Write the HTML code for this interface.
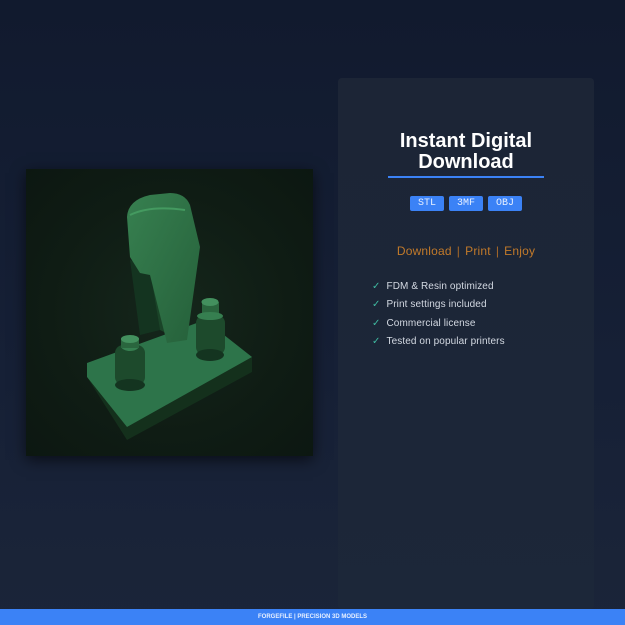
<!DOCTYPE html>
<html><head><style>
*{margin:0;padding:0;box-sizing:border-box}
body{width:625px;height:625px;overflow:hidden;position:relative;background:linear-gradient(180deg,#111a2e 0%,#162036 60%,#1b2539 100%);font-family:"Liberation Sans",sans-serif}
.panel{position:absolute;left:338px;top:78px;width:256px;height:531px;background:linear-gradient(180deg,#1c2536 0%,#1c2638 70%,#1c2739 100%);border-radius:4px}
.img{position:absolute;left:26px;top:169px;width:287px;height:287px;background:radial-gradient(circle at 50% 50%,#15261b 0%,#0f1c14 60%,#0c1711 100%);box-shadow:0 4px 14px rgba(0,0,0,.6)}
.t{position:absolute;left:338px;width:256px;text-align:center;color:#fff;font-weight:bold;font-size:20px;line-height:21px}
.line{position:absolute;left:388px;top:176px;width:156px;height:2px;background:#3b82f6}
.b{position:absolute;top:196px;height:15px;background:#3b82f6;border-radius:2px;color:#e8f0ff;font-family:"Liberation Mono",monospace;font-size:10px;line-height:15px;text-align:center}
.dl{position:absolute;left:338px;width:256px;top:244px;text-align:center;color:#c27a2a;font-size:12px;letter-spacing:.2px}
.dl span{color:#a86a28;margin:0 5px}
.li{position:absolute;left:372px;font-size:10px;color:#d3d9e2;letter-spacing:.1px}
.li i{font-style:normal;color:#3fb9a0;margin-right:6px;font-size:10px}
.foot{position:absolute;left:0;top:609px;width:625px;height:16px;background:#3b82f6;color:#e8f0ff;font-size:6px;font-weight:bold;text-align:center;line-height:16px}
</style></head><body>
<div class="img">
<svg width="287" height="287" viewBox="26 169 287 287">
<defs><linearGradient id="g" x1="0" y1="0" x2="1" y2="1"><stop offset="0" stop-color="#378050"/><stop offset="1" stop-color="#25603a"/></linearGradient></defs>
<polygon points="87,377 127,440 252,372 252,357 127,427" fill="#14301c"/>
<polygon points="87,363 205,320 252,357 127,427 87,377" fill="#2d744a"/>
<polygon points="130,260 150,265 160,330 140,335" fill="#143420"/>
<polygon points="150,270 175,300 170,335 160,330" fill="#1a4428"/>
<path d="M127,217 Q128,200 150,195 L170,193 Q185,193 190,205 L200,247 L187,340 L167,343 L150,275 L140,273 L130,257 Z" fill="url(#g)"/>
<path d="M130,215 Q150,205 185,210" stroke="#449a60" stroke-width="2" fill="none"/>
<rect x="115" y="345" width="30" height="40" rx="8" fill="#1d4a2c"/>
<ellipse cx="130" cy="385" rx="15" ry="6" fill="#143420"/>
<ellipse cx="130" cy="346" rx="9" ry="5" fill="#367f50"/>
<rect x="121" y="338" width="18" height="10" fill="#2a663e"/>
<ellipse cx="130" cy="339" rx="9" ry="4" fill="#43905e"/>
<rect x="196" y="315" width="29" height="40" rx="8" fill="#1d4a2c"/>
<ellipse cx="210" cy="355" rx="14" ry="6" fill="#143420"/>
<rect x="202" y="302" width="17" height="12" fill="#2a663e"/>
<ellipse cx="210" cy="302" rx="8.5" ry="4" fill="#43905e"/>
<ellipse cx="210" cy="316" rx="13" ry="4" fill="#367f50"/>
</svg></div>
<div class="panel"></div>
<div class="t" style="top:131px">Instant Digital</div>
<div class="t" style="top:152px">Download</div>
<div class="line"></div>
<div class="b" style="left:410px;width:34px">STL</div>
<div class="b" style="left:449px;width:34px">3MF</div>
<div class="b" style="left:488px;width:34px">OBJ</div>
<div class="dl">Download<span>|</span>Print<span>|</span>Enjoy</div>
<div class="li" style="top:281px"><i>✓</i>FDM &amp; Resin optimized</div>
<div class="li" style="top:299px"><i>✓</i>Print settings included</div>
<div class="li" style="top:318px"><i>✓</i>Commercial license</div>
<div class="li" style="top:336px"><i>✓</i>Tested on popular printers</div>
<div class="foot">FORGEFILE | PRECISION 3D MODELS</div>
</body></html>
